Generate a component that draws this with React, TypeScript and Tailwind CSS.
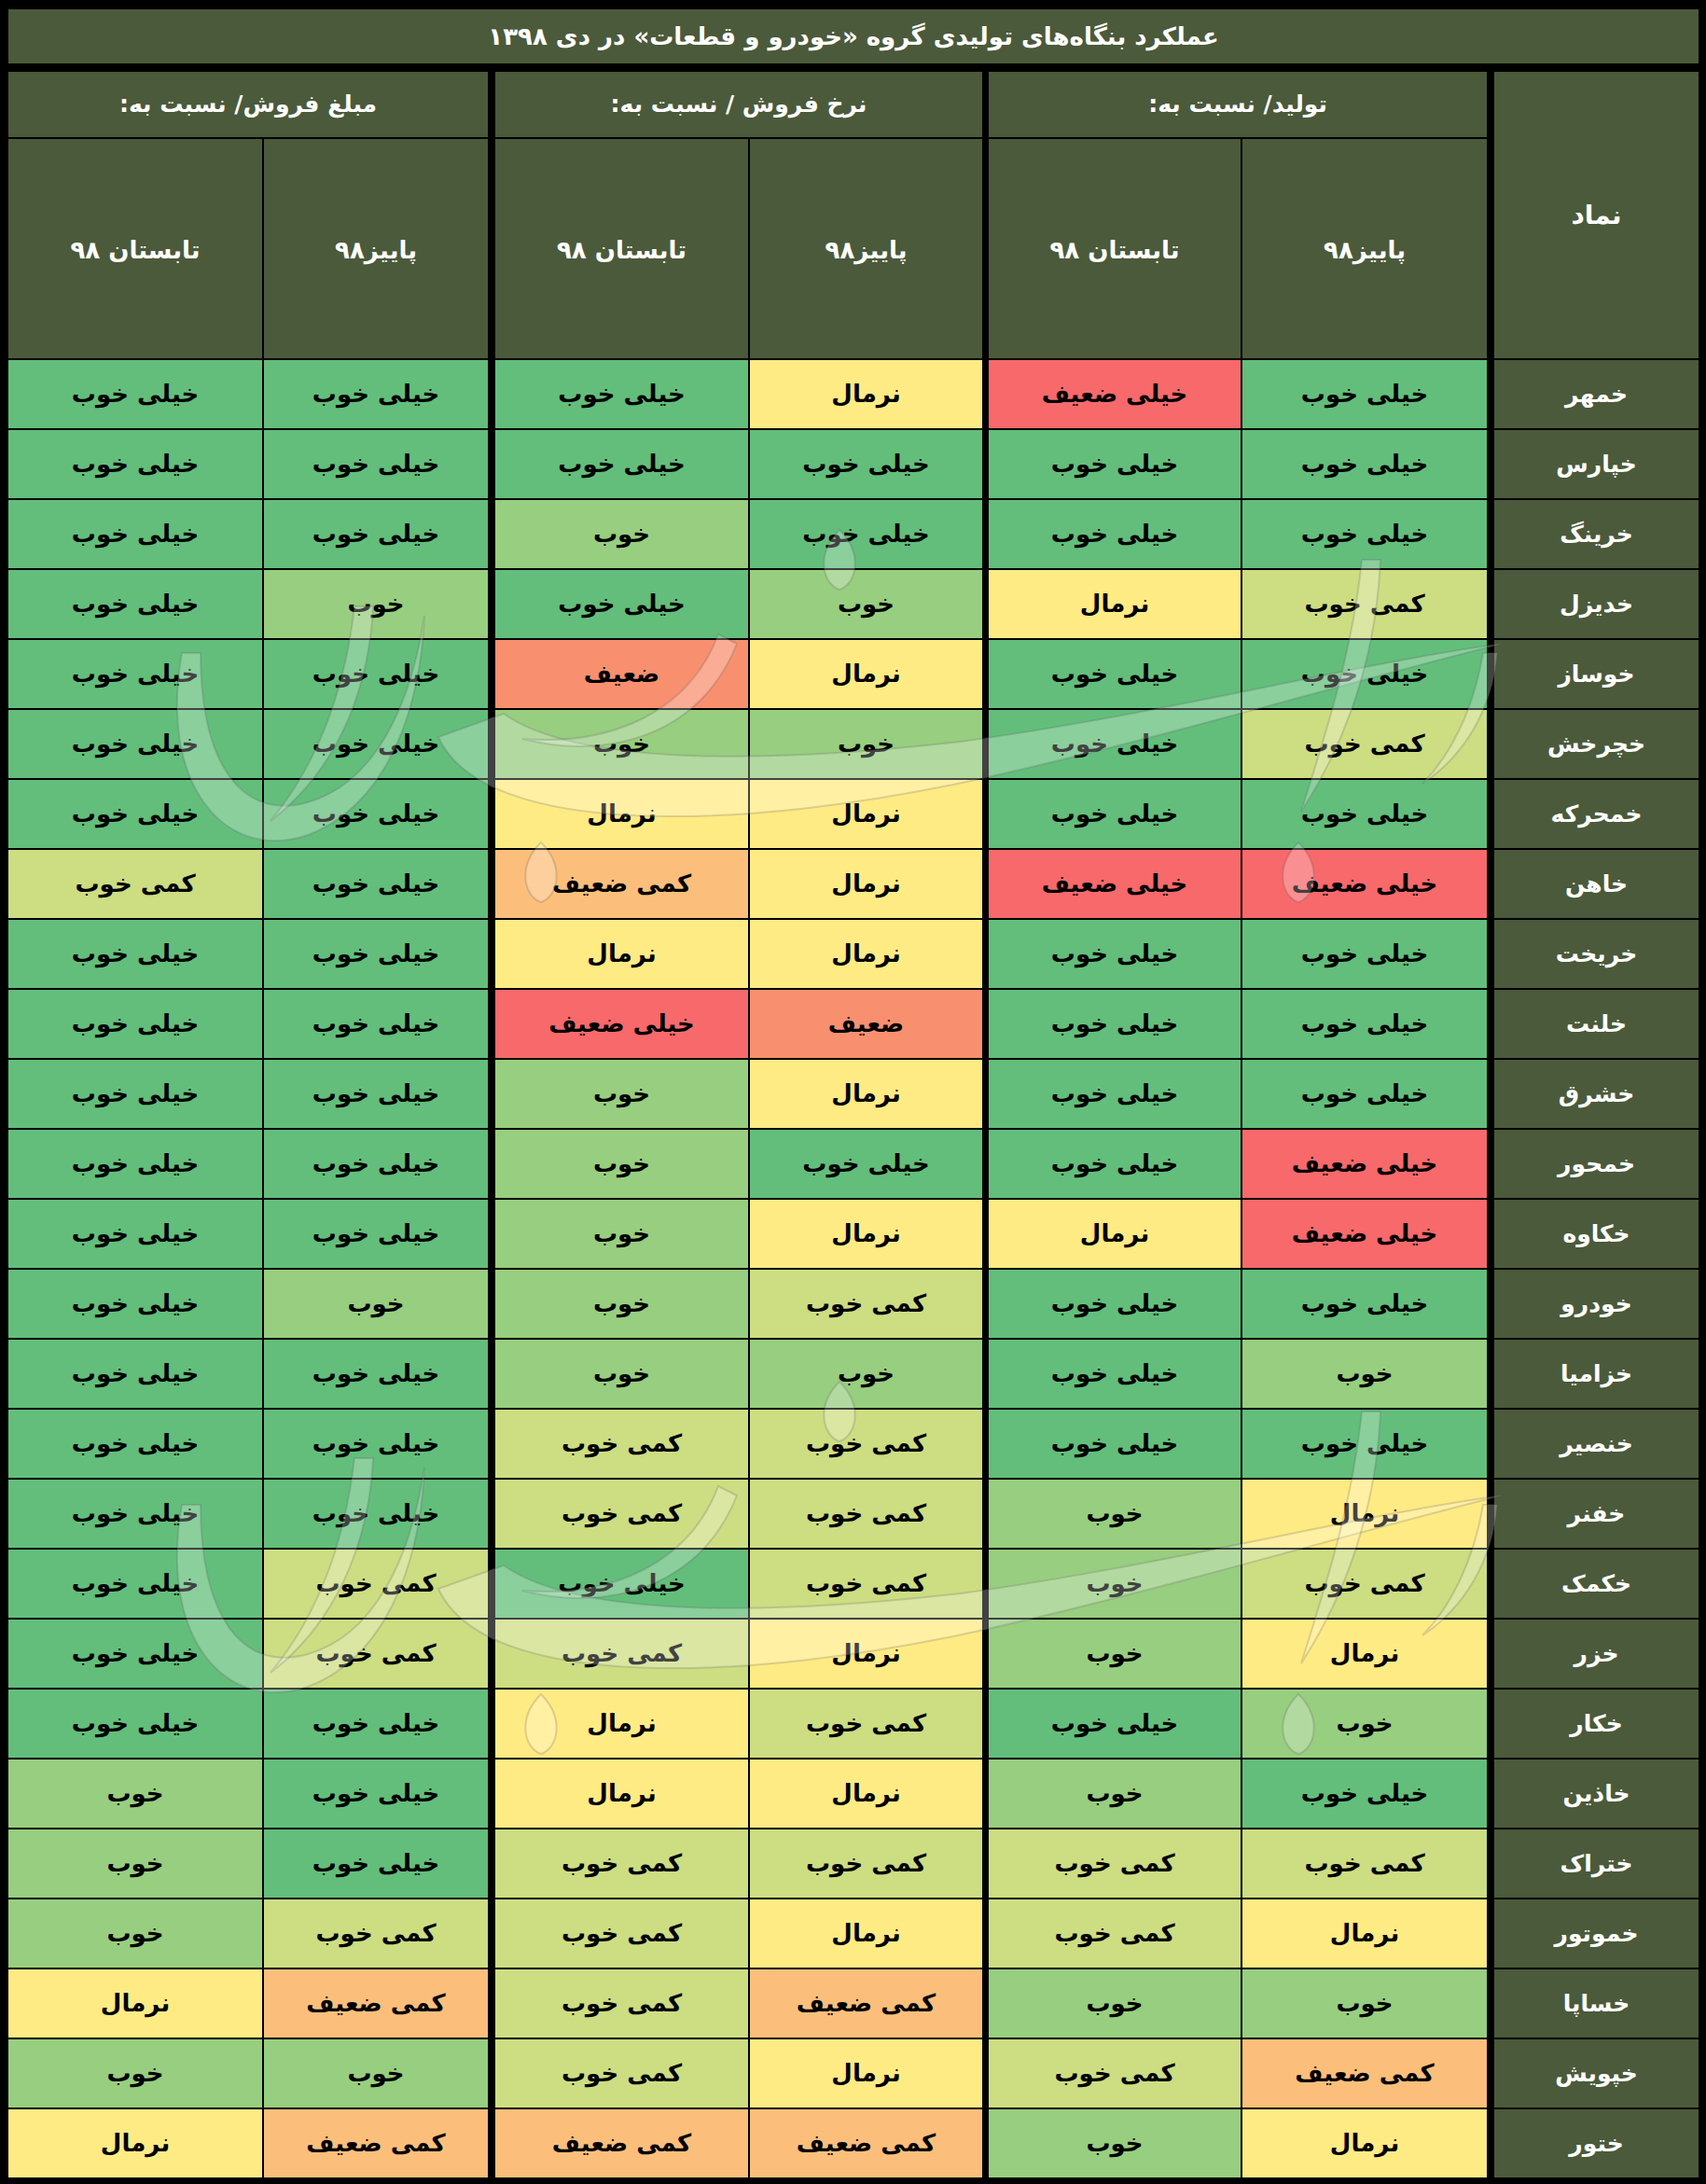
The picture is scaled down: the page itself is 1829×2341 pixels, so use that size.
import React from "react";

const LABELS: Record<string, string> = {
  A: "خیلی خوب",
  B: "خوب",
  C: "کمی خوب",
  N: "نرمال",
  D: "کمی ضعیف",
  E: "ضعیف",
  F: "خیلی ضعیف",
};

const COLORS: Record<string, string> = {
  A: "bg-[#63be7b]",
  B: "bg-[#98ce7f]",
  C: "bg-[#cddd82]",
  N: "bg-[#ffeb84]",
  D: "bg-[#fcbf7b]",
  E: "bg-[#f8906f]",
  F: "bg-[#f8696b]",
};

// columns left to right: sales amount (summer, autumn), sales rate (summer, autumn), production (summer, autumn)
const ROWS: [string, string][] = [
  ["خمهر", "AAANFA"],
  ["خپارس", "AAAAAA"],
  ["خرینگ", "AABAAA"],
  ["خدیزل", "ABABNC"],
  ["خوساز", "AAENAA"],
  ["خچرخش", "AABBAC"],
  ["خمحرکه", "AANNAA"],
  ["خاهن", "CADNFF"],
  ["خریخت", "AANNAA"],
  ["خلنت", "AAFEAA"],
  ["خشرق", "AABNAA"],
  ["خمحور", "AABAAF"],
  ["خکاوه", "AABNNF"],
  ["خودرو", "ABBCAA"],
  ["خزامیا", "AABBAB"],
  ["خنصیر", "AACCAA"],
  ["خفنر", "AACCBN"],
  ["خکمک", "ACACBC"],
  ["خزر", "ACCNBN"],
  ["خکار", "AANCAB"],
  ["خاذین", "BANNBA"],
  ["ختراک", "BACCCC"],
  ["خموتور", "BCCNCN"],
  ["خساپا", "NDCDBB"],
  ["خپویش", "BBCNCD"],
  ["ختور", "NDDDBN"],
];

const OFFSETS = ["", "", "ml-[6px]", "", "ml-[5px]", "", "ml-[6px]"];

const head = "bg-[#4b5a3a] text-white flex items-center justify-center";

function Leaf({ x, y }: { x: number; y: number }) {
  return (
    <path
      d={`M ${x} ${y - 32} C ${x + 26} ${y - 6}, ${x + 18} ${y + 26}, ${x} ${y + 32} C ${x - 18} ${y + 26}, ${x - 26} ${y - 6}, ${x} ${y - 32} Z`}
    />
  );
}

function Watermark({ dy }: { dy: number }) {
  return (
    <g transform={`translate(0 ${dy})`} fill="#ffffff" fillOpacity={0.26} stroke="#5a5a5a" strokeOpacity={0.22} strokeWidth={2}>
      <path d="M 470 790 C 520 900, 800 890, 1050 835 C 1250 790, 1450 730, 1610 690 C 1450 712, 1250 765, 1030 795 C 830 818, 620 822, 540 765 Z" />
      <path d="M 195 700 C 170 840, 240 925, 330 895 C 410 865, 450 770, 455 660 C 440 760, 400 840, 330 860 C 260 880, 215 820, 215 700 Z" />
      <path d="M 380 650 C 370 740, 340 820, 290 880 C 355 830, 395 750, 400 650 Z" />
      <path d="M 770 680 C 740 760, 660 800, 560 792 C 650 815, 750 790, 790 690 Z" />
      <path d="M 1460 600 C 1450 700, 1420 790, 1395 870 C 1440 800, 1475 710, 1480 600 Z" />
      <path d="M 1590 700 C 1580 760, 1555 810, 1525 840 C 1570 810, 1600 760, 1605 700 Z" />
      <Leaf x={580} y={935} />
      <Leaf x={1392} y={935} />
      <Leaf x={900} y={600} />
    </g>
  );
}

export default function App() {
  return (
    <div className="relative w-[1829px] bg-black pt-[10px] pb-[7px] pl-[9px] pr-[8px] font-['DejaVu_Sans',sans-serif] font-bold">
      <div className={`${head} h-[58px] mb-[9px] text-[26px]`} dir="rtl">
        عملکرد بنگاه‌های تولیدی گروه «خودرو و قطعات» در دی ۱۳۹۸
      </div>
      <div className="grid grid-cols-[272px_240px_277px_249px_275px_262px_225px] grid-rows-[70px_235px_repeat(26,73px)] gap-[2px]">
        <div className={`${head} col-span-2 text-[25px]`} dir="rtl">
          مبلغ فروش/ نسبت به:
        </div>
        <div className={`${head} col-span-2 ml-[6px] text-[25px]`} dir="rtl">
          نرخ فروش / نسبت به:
        </div>
        <div className={`${head} col-span-2 ml-[5px] text-[25px]`} dir="rtl">
          تولید/ نسبت به:
        </div>
        <div className={`${head} row-span-2 ml-[6px] text-[28px]`}>نماد</div>
        {["تابستان ۹۸", "پاییز۹۸", "تابستان ۹۸", "پاییز۹۸", "تابستان ۹۸", "پاییز۹۸"].map((t, i) => (
          <div key={i} className={`${head} ${OFFSETS[i]} pt-[4px] text-[26px]`} dir="rtl">
            {t}
          </div>
        ))}
        {ROWS.map(([name, codes]) => (
          <React.Fragment key={name}>
            {codes.split("").map((c, i) => (
              <div
                key={i}
                className={`${COLORS[c]} ${OFFSETS[i]} flex items-center justify-center text-[26px] text-black`}
                dir="rtl"
              >
                {LABELS[c]}
              </div>
            ))}
            <div className={`${head} ml-[6px] text-[25px]`} dir="rtl">
              {name}
            </div>
          </React.Fragment>
        ))}
      </div>
      <svg className="pointer-events-none absolute inset-0 h-full w-full" viewBox="0 0 1829 2341">
        <Watermark dy={0} />
        <Watermark dy={913} />
      </svg>
    </div>
  );
}
